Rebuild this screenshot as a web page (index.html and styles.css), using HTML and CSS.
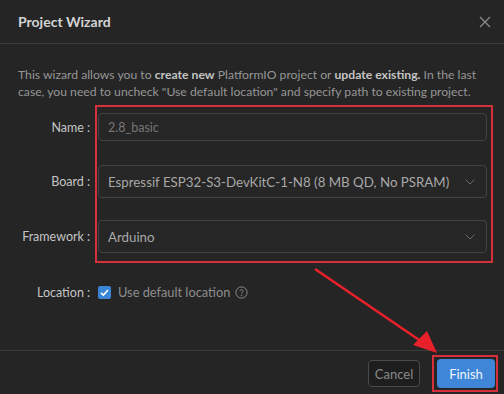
FILE: index.html
```html
<!DOCTYPE html>
<html>

<head>
  <meta charset="utf-8">
  <meta name="viewport" content="width=device-width">
  <title>Project Wizard</title>
  <link rel="stylesheet" href="styles.css">
</head>

<body>
  <div class="dialog">
    <!-- header -->
    <div class="dialog-head">
      <p class="dialog-title">Project Wizard</p>
      <svg class="close" width="12" height="12" viewBox="0 0 12 12">
        <path d="M1 1 L11 11 M11 1 L1 11" stroke="#8a8a8a" stroke-width="1.3" fill="none"/>
      </svg>
    </div>

    <!-- body -->
    <div class="dialog-body">
      <p class="intro">
        This wizard allows you to <b>create new</b> PlatformIO project or <b>update existing.</b> In the last<br>
        case, you need to uncheck "Use default location" and specify path to existing project.
      </p>

      <div class="form">
        <div class="row row-name">
          <label class="label">Name<span class="colon">:</span></label>
          <div class="field input">2.8_basic</div>
        </div>
        <div class="row row-board">
          <label class="label">Board<span class="colon">:</span></label>
          <div class="field select">
            <span>Espressif ESP32-S3-DevKitC-1-N8 (8 MB QD, No PSRAM)</span>
            <svg width="10" height="6" viewBox="0 0 10 6"><path d="M0.5 0.5 L5 5 L9.5 0.5" stroke="#6a6a6a" stroke-width="1" fill="none"/></svg>
          </div>
        </div>
        <div class="row row-framework">
          <label class="label">Framework<span class="colon">:</span></label>
          <div class="field select">
            <span>Arduino</span>
            <svg width="10" height="6" viewBox="0 0 10 6"><path d="M0.5 0.5 L5 5 L9.5 0.5" stroke="#6a6a6a" stroke-width="1" fill="none"/></svg>
          </div>
        </div>
        <div class="row row-location">
          <label class="label">Location<span class="colon">:</span></label>
          <div class="check-line">
            <span class="checkbox">
              <svg width="13" height="13" viewBox="0 0 13 13"><path d="M3 6.8 L5.4 9 L10 4" stroke="#fff" stroke-width="1.6" fill="none"/></svg>
            </span>
            <span class="check-text">Use default location</span>
            <svg class="help" width="13" height="13" viewBox="0 0 13 13">
              <circle cx="6.5" cy="6.5" r="5.6" stroke="#8a8a8a" stroke-width="1" fill="none"/>
              <path d="M4.9 5.2 C4.9 3.3 8.1 3.3 8.1 5.1 C8.1 6.3 6.5 6.3 6.5 7.7" stroke="#8a8a8a" stroke-width="1" fill="none"/>
              <circle cx="6.5" cy="9.5" r="0.65" fill="#8a8a8a"/>
            </svg>
          </div>
        </div>
      </div>
    </div>

    <!-- footer -->
    <div class="dialog-foot">
      <button class="btn btn-cancel" type="button">Cancel</button>
      <button class="btn btn-finish" type="button">Finish</button>
    </div>

    <!-- annotation overlay -->
    <div class="mark mark-fields"></div>
    <div class="mark mark-finish"></div>
    <svg class="arrow" width="504" height="394" viewBox="0 0 504 394">
      <line x1="315" y1="269" x2="428" y2="346" stroke="#e8202a" stroke-width="2.6"/>
      <polygon points="437,353 413,345 427,331" fill="#e8202a"/>
    </svg>
  </div>
</body>

</html>
```

FILE: styles.css
```css
body {
  margin: 0;
  background-color: #252525;
  font-family: Lato, "Noto Sans", sans-serif;
}

.dialog {
  position: relative;
  width: 504px;
  height: 394px;
  background-color: #252525;
  color: #9a9a9a;
  overflow: hidden;
}

/* header */
.dialog-head {
  height: 44px;
  border-bottom: 1px solid #3a3a3a;
  display: flex;
  align-items: center;
  justify-content: space-between;
  padding: 0 13px 0 18px;
  box-sizing: border-box;
}

.dialog-title {
  margin: 0;
  font-size: 14px;
  font-weight: 700;
  color: #d4d4d4;
}

/* body */
.dialog-body {
  box-sizing: border-box;
  height: 307px;
  border-bottom: 1px solid #3a3a3a;
  padding: 22px 17px 0 18px;
}

.intro {
  margin: 0;
  font-size: 12.2px;
  line-height: 17px;
  white-space: nowrap;
  color: #969696;
}

.intro b {
  color: #c4c4c4;
}

.form {
  margin-top: 13px;
}

.row {
  display: grid;
  grid-template-columns: 72px 1fr;
  column-gap: 8px;
  align-items: center;
}

.row-board {
  margin-top: 24px;
}

.row-framework {
  margin-top: 22px;
}

.row-location {
  margin-top: 29px;
}

.label {
  text-align: right;
  font-size: 12.5px;
  color: #c4c4c4;
}

.colon {
  margin-left: 3px;
}

.field {
  box-sizing: border-box;
  border: 1px solid #434343;
  border-radius: 4px;
  background-color: #262626;
  padding: 0 9px;
  display: flex;
  align-items: center;
  white-space: nowrap;
}

.input {
  height: 28px;
  font-size: 12.5px;
  color: #767676;
}

.select {
  height: 33px;
  justify-content: space-between;
  font-size: 13.3px;
  color: #a8a8a8;
}

.select svg {
  margin-right: 2px;
}

.check-line {
  display: flex;
  align-items: center;
  height: 20px;
}

.checkbox {
  width: 13px;
  height: 13px;
  border-radius: 2px;
  background-color: #3a86d6;
  display: flex;
}

.check-text {
  margin-left: 7px;
  font-size: 12.8px;
  color: #8e8e8e;
}

.help {
  margin-left: 5px;
}

/* footer */
.dialog-foot {
  display: flex;
  justify-content: flex-end;
  align-items: center;
  gap: 17px;
  padding: 8px 9px 0 0;
}

.btn {
  font-family: Lato, "Noto Sans", sans-serif;
  font-size: 13px;
  border-radius: 4px;
  cursor: pointer;
}

.btn-cancel {
  width: 52px;
  height: 27px;
  padding: 0;
  background-color: #1e1e1e;
  border: 1px solid #4a4a4a;
  color: #8a8a8a;
}

.btn-finish {
  width: 58px;
  height: 29px;
  padding: 0;
  background-color: #3f86d8;
  border: none;
  color: #eef4fb;
}

/* annotation overlay */
.mark {
  position: absolute;
  border: 2px solid #d5303c;
  box-sizing: border-box;
}

.mark-fields {
  left: 95px;
  top: 105px;
  width: 398px;
  height: 158px;
}

.mark-finish {
  left: 432px;
  top: 355px;
  width: 66px;
  height: 37px;
}

.arrow {
  position: absolute;
  left: 0;
  top: 0;
  pointer-events: none;
}
```
